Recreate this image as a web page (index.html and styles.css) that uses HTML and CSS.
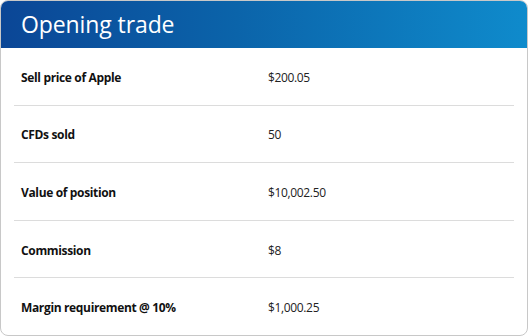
FILE: index.html
```html
<!DOCTYPE html>
<html>
<head>
<meta charset="utf-8">
<link rel="stylesheet" href="styles.css">
</head>
<body>
<div class="card">
  <div class="card-header">Opening trade</div>
  <div class="card-body">
    <div class="row"><div class="label">Sell price of Apple</div><div class="value">$200.05</div></div>
    <div class="row"><div class="label">CFDs sold</div><div class="value">50</div></div>
    <div class="row"><div class="label">Value of position</div><div class="value">$10,002.50</div></div>
    <div class="row"><div class="label">Commission</div><div class="value">$8</div></div>
    <div class="row"><div class="label">Margin requirement @ 10%</div><div class="value">$1,000.25</div></div>
  </div>
</div>
</body>
</html>
```
FILE: styles.css
```css
html, body {
  margin: 0;
  padding: 0;
  background: #ffffff;
}
body {
  font-family: "Open Sans", "Liberation Sans", sans-serif;
  color: #1a1a1a;
}
.card {
  width: 528px;
  height: 336px;
  box-sizing: border-box;
  border: 1px solid #c8c8c8;
  border-radius: 8px;
  overflow: hidden;
  display: flex;
  flex-direction: column;
}
.card-header {
  height: 48px;
  flex: none;
  box-sizing: border-box;
  padding: 7px 0 0 21px;
  margin: -1px -1px 0 -1px;
  background: linear-gradient(90deg, #0b4696 0%, #0b64aa 45%, #0f8bcc 100%);
  color: #ffffff;
  font-size: 23px;
  line-height: 34px;
  letter-spacing: -0.1px;
}
.card-body {
  flex: 1;
  display: flex;
  flex-direction: column;
  padding: 0 13px;
}
.row {
  flex: 1;
  display: flex;
  align-items: center;
  box-sizing: border-box;
  padding: 2px 0 0 7px;
  border-bottom: 1.5px solid #dcdcdc;
  font-size: 12px;
}
.row:last-child {
  border-bottom: none;
}
.label {
  width: 247px;
  font-weight: 700;
  letter-spacing: -0.35px;
  color: #111111;
}
.value {
  letter-spacing: -0.35px;
  color: #222222;
}
```
